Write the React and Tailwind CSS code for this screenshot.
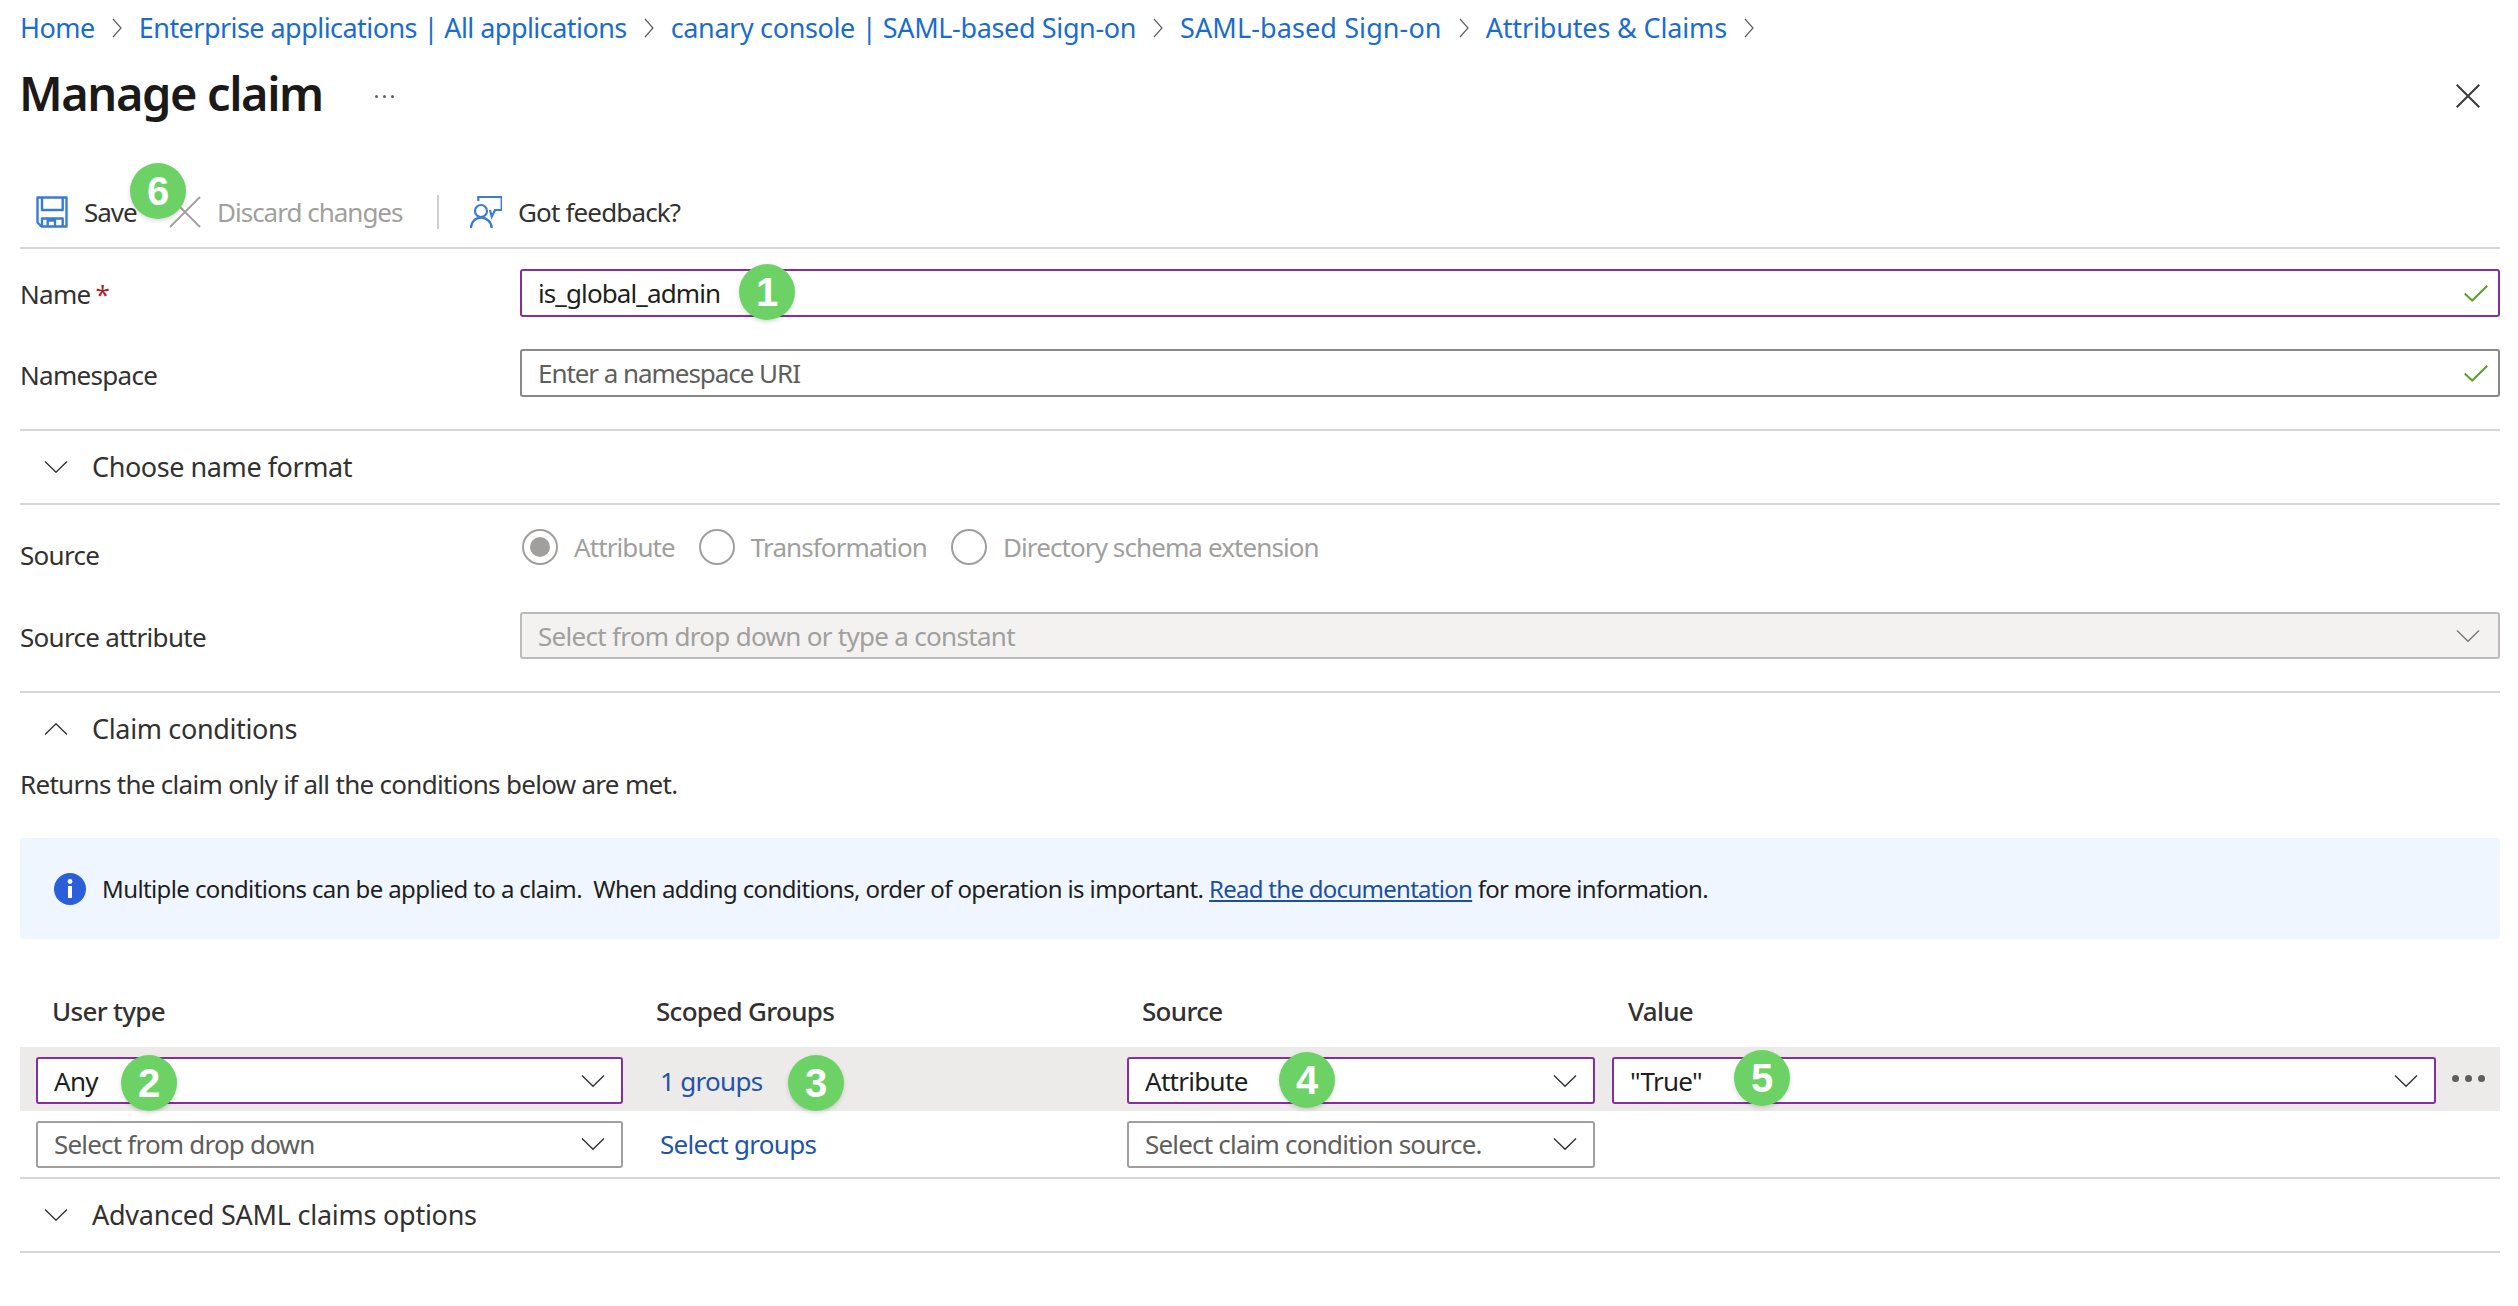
function Chevron({ up = false, className = "" }) {
  return (
    <svg viewBox="0 0 24 12" fill="none" stroke="currentColor" strokeWidth="1.4" className={className}>
      <path d={up ? "M1 11.5 12 .8 23 11.5" : "M1 .5 12 11.2 23 .5"} />
    </svg>
  );
}

function Badge({ n, className = "" }) {
  return (
    <span className={"absolute z-10 flex h-[56px] w-[56px] items-center justify-center rounded-full bg-[#6dd266] font-['Liberation_Sans',sans-serif] text-[40px] font-bold tracking-normal text-white shadow-[0_2px_4px_rgba(0,0,0,0.15)] " + className}>
      {n}
    </span>
  );
}

function Crumb({ label, className = "" }) {
  return (
    <>
      <a className={"text-[#1a6dcc] " + className}>{label}</a>
      <svg viewBox="0 0 10 20" fill="none" stroke="#605e5c" strokeWidth="1.2" className="mx-[16px] h-[20px] w-[12px]">
        <path d="M1 1l8 9-8 9" />
      </svg>
    </>
  );
}

function Field({ label, required, children, className = "" }) {
  return (
    <div className={"flex " + className}>
      <div className="w-[500px] shrink-0 text-[#323130]">
        {label}
        {required && <span className="ml-[5px] text-[#a4262c]">*</span>}
      </div>
      <div className="relative flex-1">{children}</div>
    </div>
  );
}

function Input({ value, placeholder, purple, badge }) {
  return (
    <div className={"relative flex h-[48px] items-center rounded-[3px] border-2 pl-[16px] pr-[10px] leading-[36px] " + (purple ? "border-[#842e9f]" : "border-[#8a8886]")}>
      <span className={value ? "tracking-[-0.9px] text-[#201f1e]" : "tracking-[-1.05px] text-[#605e5c]"}>{value || placeholder}</span>
      {badge}
      <svg viewBox="0 0 24 17" fill="none" stroke="#5c9f2c" strokeWidth="2" className="ml-auto h-[17px] w-[24px]">
        <path d="M.7 8.5l7.5 7L23.3.7" />
      </svg>
    </div>
  );
}

function Select({ text, placeholder, purple, width, badge, className = "" }) {
  return (
    <div className={"relative flex h-[47px] items-center rounded-[3px] border-2 bg-white pl-[16px] pr-[16px] " + (purple ? "border-[#842e9f] " : "border-[#a19f9d] ") + width + " " + className}>
      <span className={text ? "text-[#201f1e]" : "tracking-[-0.8px] text-[#605e5c]"}>{text || placeholder}</span>
      {badge}
      <Chevron className="ml-auto h-[14px] w-[24px] text-[#323130]" />
    </div>
  );
}

function Section({ label, up, className = "" }) {
  return (
    <div className="flex h-[72px] items-center pl-[24px] text-[#323130]">
      <Chevron up={up} className="h-[12px] w-[24px]" />
      <span className={"ml-[24px] text-[27px] " + className}>{label}</span>
    </div>
  );
}

function Radio({ label, on }) {
  return (
    <div className="mr-[24px] flex items-center">
      <span className="flex h-[36px] w-[36px] items-center justify-center rounded-full border-2 border-[#a19f9d]">
        {on && <span className="h-[20px] w-[20px] rounded-full bg-[#a19f9d]" />}
      </span>
      <span className="ml-[16px] tracking-[-0.9px] text-[#a19f9d]">{label}</span>
    </div>
  );
}

export default function App() {
  return (
    <div className="h-[1306px] w-[2518px] overflow-hidden bg-white pl-[20px] pr-[18px] font-['Noto_Sans',sans-serif] text-[26px] leading-[36px] tracking-[-0.7px]">
      {/* breadcrumb */}
      <div className="flex h-[56px] items-center text-[27px] tracking-[-0.5px]">
        <Crumb label="Home" />
        <Crumb label="Enterprise applications | All applications" className="tracking-[-0.55px]" />
        <Crumb label="canary console | SAML-based Sign-on" className="tracking-[-0.36px]" />
        <Crumb label="SAML-based Sign-on" className="tracking-[0.1px]" />
        <Crumb label="Attributes & Claims" className="tracking-[-0.15px]" />
      </div>

      {/* title */}
      <div className="flex h-[80px] items-center">
        <h1 className="-ml-[1px] mb-[6px] text-[47px] font-semibold tracking-[-1.4px] text-[#1b1a19]">Manage claim</h1>
        <span className="ml-[52px] flex gap-[5px]">
          <i className="h-[3px] w-[3px] rounded-full bg-[#605e5c]" />
          <i className="h-[3px] w-[3px] rounded-full bg-[#605e5c]" />
          <i className="h-[3px] w-[3px] rounded-full bg-[#605e5c]" />
        </span>
        <svg viewBox="0 0 24 24" fill="none" stroke="#3b3a39" strokeWidth="2" className="ml-auto mr-[20px] h-[24px] w-[24px]">
          <path d="M.7.7l22.6 22.6M23.3.7L.7 23.3" />
        </svg>
      </div>

      {/* toolbar */}
      <div className="mt-[42px] flex h-[71px] items-center border-b-2 border-[#d6d6d6] pb-[2px] pl-[16px] tracking-[-1px]">
        <svg viewBox="0 0 32 32" fill="none" stroke="#3a7bd5" strokeWidth="2.4" strokeLinejoin="round" className="h-[32px] w-[32px]">
          <path d="M1.5 1.5h29v29H5.5l-4-4z" />
          <path d="M6 1.5V14h20.7V1.5M6 30.5v-8h20.7v8M11.7 30.5v-6H19v6" />
        </svg>
        <span className="relative ml-[16px] w-[53px] text-[#323130]">
          Save
          <Badge n="6" className="-top-[31px] left-[46px]" />
        </span>
        <svg viewBox="0 0 32 32" fill="none" stroke="#a19f9d" strokeWidth="1.8" className="ml-[32px] h-[32px] w-[32px]">
          <path d="M1 1l30 30M31 1L1 31" />
        </svg>
        <span className="ml-[16px] w-[186px] whitespace-nowrap text-[#a19f9d]">Discard changes</span>
        <span className="ml-[34px] h-[34px] w-[2px] bg-[#d2d0ce]" />
        <svg viewBox="0 0 32 32" fill="none" stroke="#3a7bd5" strokeWidth="2.2" className="ml-[31px] h-[32px] w-[32px]">
          <path d="M8.3 5V1h23.4v13H25l-3.3 6.7L20 14" />
          <circle cx="11" cy="15" r="6" />
          <path d="M.9 32c0-6 4.500-10.300 10.100-10.300S21.700 26 21.700 32" />
        </svg>
        <span className="ml-[16px] tracking-[-0.85px] text-[#323130]">Got feedback?</span>
      </div>

      {/* name + namespace */}
      <Field label="Name" required className="mt-[20px] h-[48px] leading-[50px]">
        <Input value="is_global_admin" purple badge={<Badge n="1" className="left-[217px] top-[-7px]" />} />
      </Field>
      <Field label="Namespace" className="mt-[32px] h-[48px] leading-[52px]">
        <Input placeholder="Enter a namespace URI" />
      </Field>

      <div className="mt-[32px] border-t-2 border-[#d6d6d6]">
        <Section label="Choose name format" className="tracking-[-0.43px]" />
      </div>

      <div className="border-t-2 border-[#d6d6d6] pt-[24px]">
        <Field label={<span className="mt-[8px] block">Source</span>} className="h-[36px]">
          <div className="flex h-[36px] items-center pl-[2px]">
            <Radio label="Attribute" on />
            <Radio label="Transformation" />
            <Radio label="Directory schema extension" />
          </div>
        </Field>
        <Field label={<span className="block leading-[50px]">Source attribute</span>} className="mt-[47px] h-[47px]">
          <div className="flex h-[47px] items-center rounded-[3px] border-2 border-[#bdbbb9] bg-[#f3f2f1] pl-[16px] pr-[18px] text-[#a19f9d]">
            Select from drop down or type a constant
            <Chevron className="ml-auto h-[14px] w-[24px] text-[#7a7876]" />
          </div>
        </Field>
      </div>

      <div className="mt-[32px] border-t-2 border-[#d6d6d6]">
        <Section label="Claim conditions" up className="tracking-[-0.35px]" />
      </div>
      <p className="mt-[1px] text-[#323130]">Returns the claim only if all the conditions below are met.</p>

      {/* info banner */}
      <div className="mt-[36px] flex h-[101px] items-center rounded-[3px] bg-[#f0f6ff] pl-[34px] text-[24px] tracking-[-0.61px] text-[#201f1e]">
        <svg viewBox="0 0 32 32" className="h-[32px] w-[32px] shrink-0">
          <circle cx="16" cy="16" r="16" fill="#2b5fd9" />
          <circle cx="16" cy="8.5" r="2.4" fill="#fff" />
          <rect x="14" y="13" width="4" height="12" fill="#fff" />
        </svg>
        <span className="ml-[16px] whitespace-pre pt-[1px]">
          {"Multiple conditions can be applied to a claim.  When adding conditions, order of operation is important. "}
          <a className="tracking-[-0.72px] text-[#1c4f9f] underline">Read the documentation</a>
          <span className="tracking-[-0.72px]">{" for more information."}</span>
        </span>
      </div>

      {/* conditions table */}
      <div className="mt-[52px] grid h-[40px] grid-cols-[604px_486px_486px_1fr] items-center pl-[32px] font-medium text-[#323130]">
        <span>User type</span>
        <span>Scoped Groups</span>
        <span>Source</span>
        <span>Value</span>
      </div>
      <div className="mt-[16px] flex h-[64px] items-center bg-[#edebe9] pl-[16px] pt-[3px]">
        <Select text="Any" purple width="w-[587px]" badge={<Badge n="2" className="left-[83px] top-[-4px]" />} />
        <span className="relative ml-[37px] w-[467px] text-[#1f55a8]">
          1 groups
          <Badge n="3" className="left-[128px] top-[-8px]" />
        </span>
        <Select text="Attribute" purple width="w-[468px]" badge={<Badge n="4" className="left-[150px] top-[-7px]" />} />
        <Select text={'"True"'} purple width="ml-[17px] w-[824px]" badge={<Badge n="5" className="left-[120px] top-[-9px]" />} />
        <span className="ml-[16px] flex gap-[6px] pb-[4px]">
          <i className="h-[7px] w-[7px] rounded-full bg-[#605e5c]" />
          <i className="h-[7px] w-[7px] rounded-full bg-[#605e5c]" />
          <i className="h-[7px] w-[7px] rounded-full bg-[#605e5c]" />
        </span>
      </div>
      <div className="flex h-[68px] items-center border-b-2 border-[#d6d6d6] pl-[16px]">
        <Select placeholder="Select from drop down" width="w-[587px]" />
        <span className="ml-[37px] w-[467px] text-[#1f55a8]">Select groups</span>
        <Select placeholder="Select claim condition source." width="w-[468px]" />
      </div>

      <div className="border-b-2 border-[#d6d6d6]">
        <Section label="Advanced SAML claims options" className="tracking-[-0.25px]" />
      </div>
    </div>
  );
}
